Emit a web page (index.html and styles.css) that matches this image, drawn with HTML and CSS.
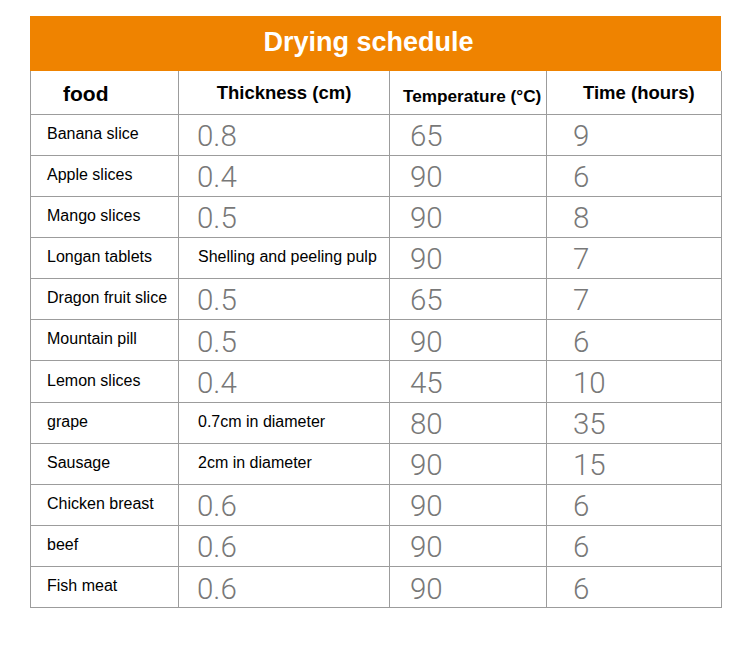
FILE: index.html
```html
<!DOCTYPE html>
<html lang="en">
<head>
<meta charset="utf-8">
<title>Drying schedule</title>
<link rel="stylesheet" href="styles.css">
</head>
<body>
<div class="sheet">
  <div class="banner">Drying schedule</div>
  <table class="grid">
    <colgroup>
      <col class="c1"><col class="c2"><col class="c3"><col class="c4">
    </colgroup>
    <thead>
      <tr class="head">
        <th class="h-food">food</th>
        <th class="h-thick">Thickness (cm)</th>
        <th class="h-temp">Temperature (°C)</th>
        <th class="h-time">Time (hours)</th>
      </tr>
    </thead>
    <tbody>
      <tr><td class="name">Banana slice</td><td class="num n2">0.8</td><td class="num n3">65</td><td class="num n4">9</td></tr>
      <tr><td class="name">Apple slices</td><td class="num n2">0.4</td><td class="num n3">90</td><td class="num n4">6</td></tr>
      <tr><td class="name">Mango slices</td><td class="num n2">0.5</td><td class="num n3">90</td><td class="num n4">8</td></tr>
      <tr><td class="name">Longan tablets</td><td class="txt">Shelling and peeling pulp</td><td class="num n3">90</td><td class="num n4">7</td></tr>
      <tr><td class="name">Dragon fruit slice</td><td class="num n2">0.5</td><td class="num n3">65</td><td class="num n4">7</td></tr>
      <tr><td class="name">Mountain pill</td><td class="num n2">0.5</td><td class="num n3">90</td><td class="num n4">6</td></tr>
      <tr><td class="name">Lemon slices</td><td class="num n2">0.4</td><td class="num n3">45</td><td class="num n4">10</td></tr>
      <tr><td class="name">grape</td><td class="txt">0.7cm in diameter</td><td class="num n3">80</td><td class="num n4">35</td></tr>
      <tr><td class="name">Sausage</td><td class="txt">2cm in diameter</td><td class="num n3">90</td><td class="num n4">15</td></tr>
      <tr><td class="name">Chicken breast</td><td class="num n2">0.6</td><td class="num n3">90</td><td class="num n4">6</td></tr>
      <tr><td class="name">beef</td><td class="num n2">0.6</td><td class="num n3">90</td><td class="num n4">6</td></tr>
      <tr><td class="name">Fish meat</td><td class="num n2">0.6</td><td class="num n3">90</td><td class="num n4">6</td></tr>
    </tbody>
  </table>
</div>
</body>
</html>
```
FILE: styles.css
```css
html, body {
  margin: 0;
  padding: 0;
  background: #ffffff;
}
body {
  font-family: "Liberation Sans", Arial, sans-serif;
  color: #000;
}
.sheet {
  width: 691px;
  margin: 16px 0 0 30px;
}
.banner {
  height: 55px;
  background: #ef8300;
  color: #ffffff;
  font-weight: bold;
  font-size: 27px;
  line-height: 52px;
  text-align: center;
  padding-right: 14px;
  box-sizing: border-box;
}
.grid {
  width: 691px;
  border-collapse: collapse;
  table-layout: fixed;
}
.c1 { width: 148px; }
.c2 { width: 211px; }
.c3 { width: 157px; }
.c4 { width: 175px; }
.grid th,
.grid td {
  border: 1px solid #9c9c9c;
  white-space: nowrap;
}
.grid thead th {
  border-top: none;
}
.grid .head th {
  height: 43px;
  font-weight: bold;
  font-size: 18.5px;
  vertical-align: middle;
  padding: 2px 0 0 0;
  box-sizing: border-box;
}
.grid .head .h-food {
  text-align: left;
  padding: 6px 0 2px 32px;
  font-size: 21px;
}
.grid .head .h-thick {
  text-align: center;
  padding: 1px 0 0 0;
}
.grid .head .h-temp {
  text-align: left;
  padding: 9px 0 0 13px;
  font-size: 17.2px;
}
.grid .head .h-time {
  text-align: left;
  padding: 1px 0 0 36px;
}
.grid tbody td {
  height: 41.17px;
  box-sizing: border-box;
  vertical-align: middle;
}
.grid .name {
  font-size: 16px;
  padding: 0 0 2px 16px;
}
.grid .txt {
  font-size: 16px;
  padding: 0 0 2px 19px;
}
.grid .num {
  font-family: Roboto, "Liberation Sans", sans-serif;
  font-weight: 300;
  font-size: 29.5px;
  color: #787878;
  line-height: 1;
  padding: 4px 0 0 0;
}
.grid .n2 { padding-left: 18px; }
.grid .n3 { padding-left: 20px; }
.grid .n4 { padding-left: 26px; }
```
